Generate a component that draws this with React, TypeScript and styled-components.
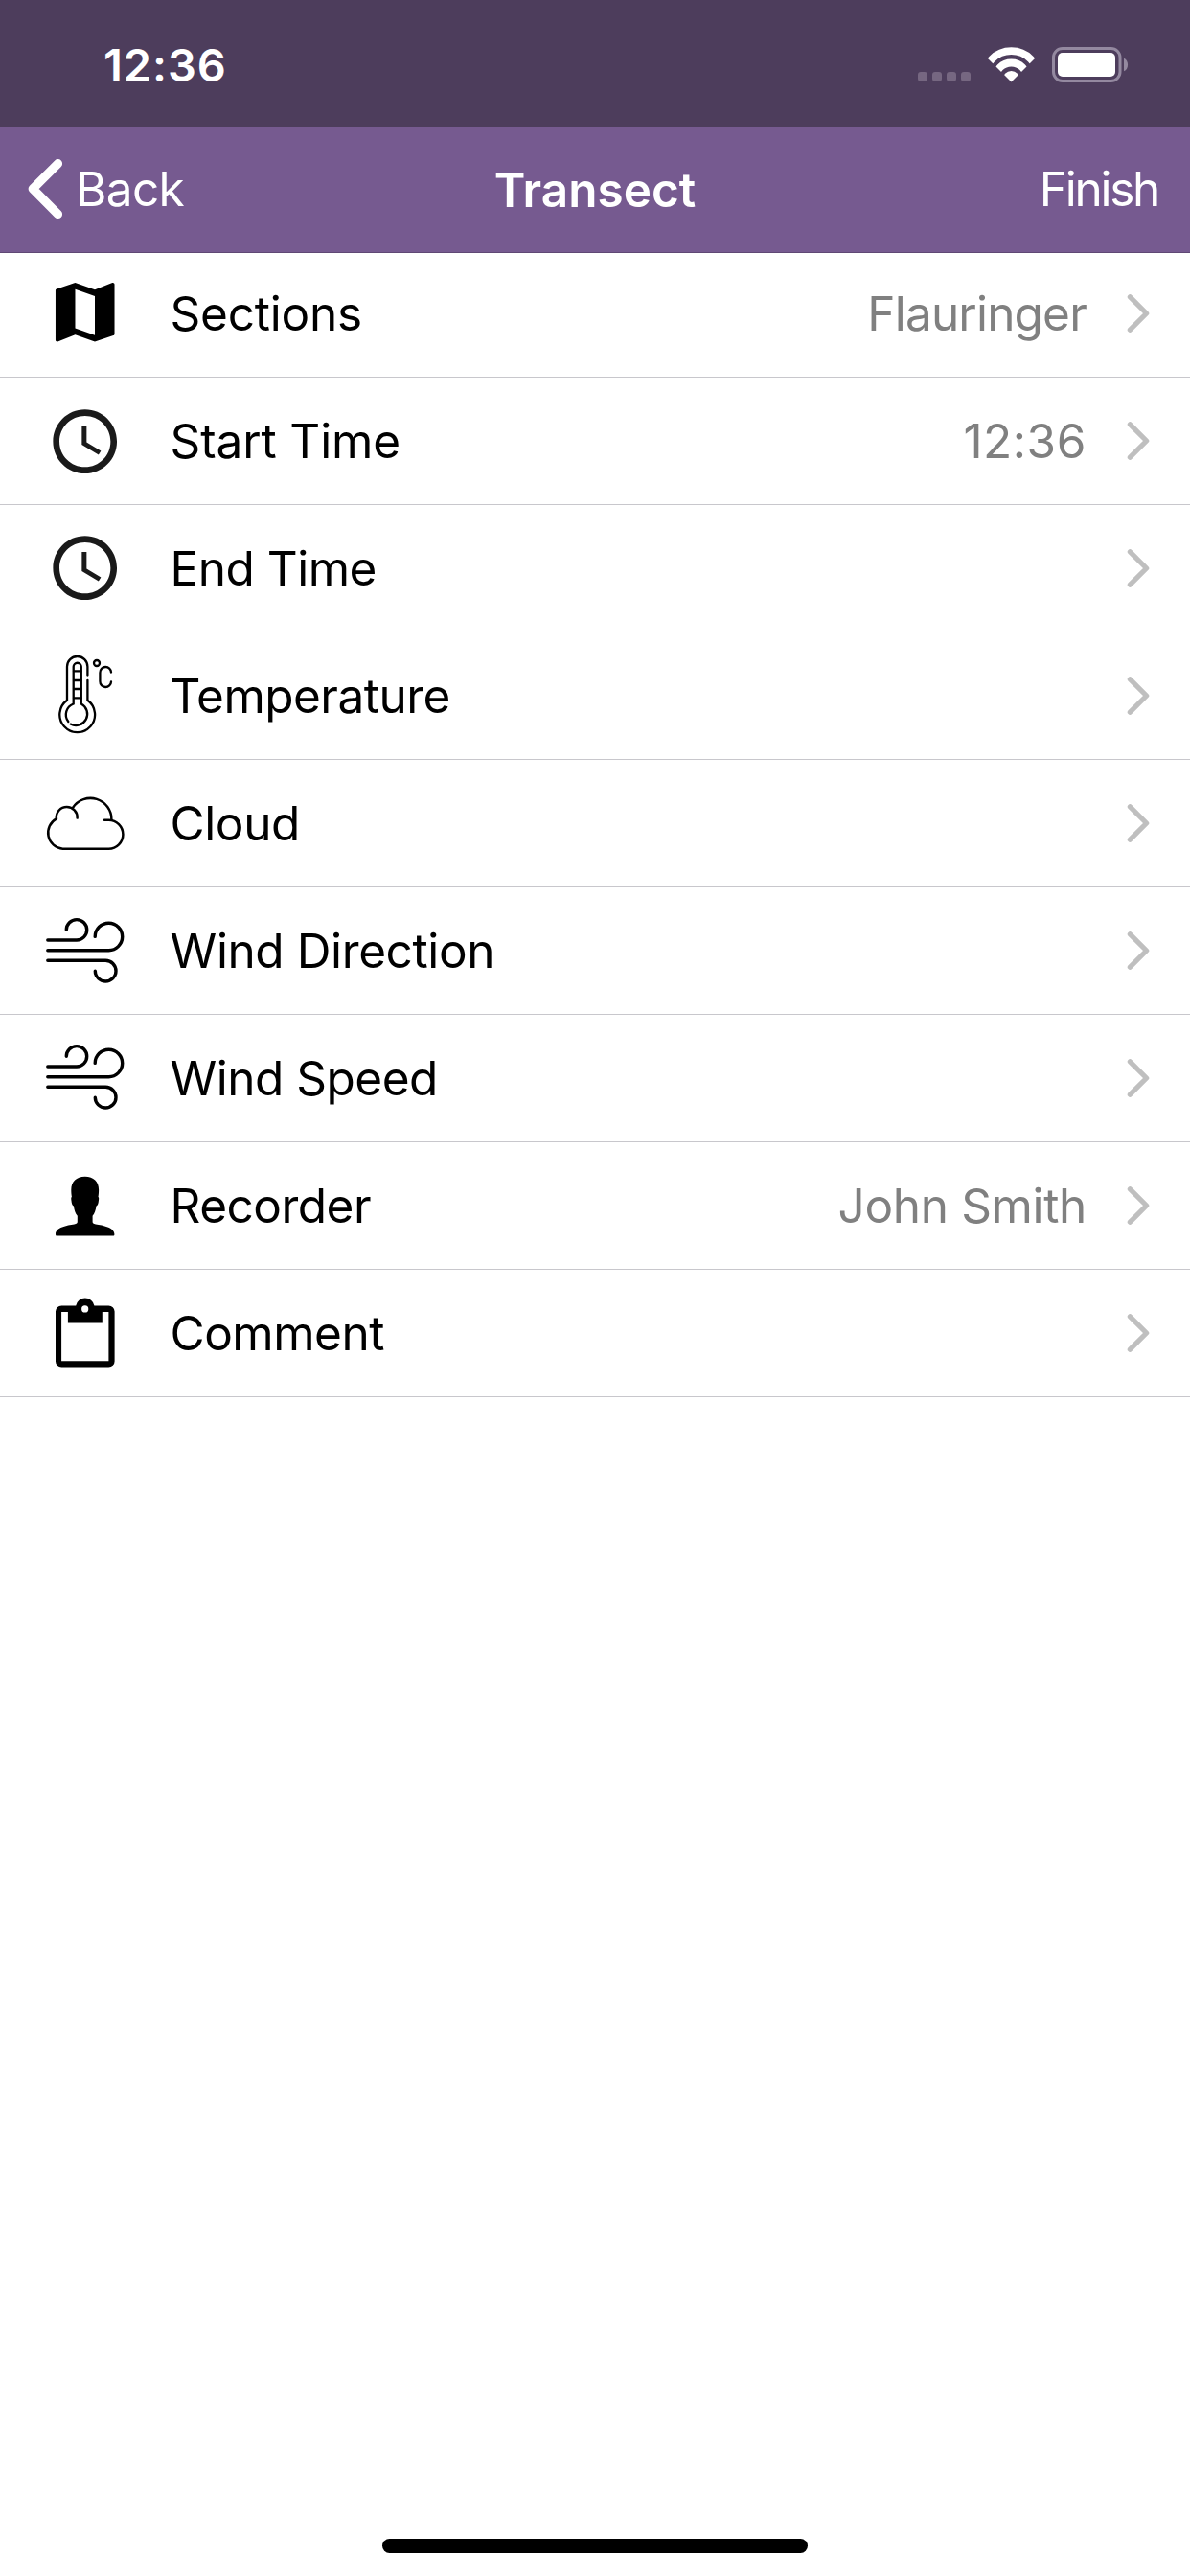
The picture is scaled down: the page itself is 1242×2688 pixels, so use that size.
import React from "react";
import styled, { createGlobalStyle } from "styled-components";

const GlobalStyle = createGlobalStyle`
  *, *::before, *::after { box-sizing: border-box; }
  body {
    margin: 0;
    background: #fff;
    font-family: Inter, "Liberation Sans", sans-serif;
  }
`;

const Screen = styled.div`
  display: flex;
  flex-direction: column;
  width: 1242px;
  height: 2688px;
  overflow: hidden;
  background: #fff;
`;

const StatusBar = styled.header`
  display: flex;
  align-items: center;
  justify-content: space-between;
  height: 132px;
  padding: 4px 60px 0 108px;
  background: #4d3d5c;
  color: #fff;
`;

const Clock = styled.span`
  font-size: 47px;
  font-weight: 600;
  line-height: 56px;
  letter-spacing: 0.93px;
`;

const NavBar = styled.nav`
  display: grid;
  grid-template-columns: 1fr auto 1fr;
  align-items: center;
  height: 132px;
  padding: 0 33px 1px 28px;
  border-bottom: 1px solid #5f4874;
  background: #765a90;
  color: #fff;
`;

const NavButton = styled.button<{ $end?: boolean; $tracking: number }>`
  display: flex;
  align-items: center;
  justify-self: ${(p) => (p.$end ? "end" : "start")};
  gap: 11px;
  padding: 0;
  border: 0;
  background: none;
  color: inherit;
  font: 400 49.5px/60px Inter, "Liberation Sans", sans-serif;
  letter-spacing: ${(p) => p.$tracking}px;
`;

const Title = styled.h1`
  margin: 2px 0 0 5px;
  font-size: 49.5px;
  font-weight: 600;
  line-height: 60px;
`;

const List = styled.ul`
  display: flex;
  flex-direction: column;
  flex: 1;
  margin: 0;
  padding: 0;
  list-style: none;
`;

const Row = styled.li`
  display: flex;
  align-items: center;
  height: 133px;
  padding: 0 42px 0 40px;
  border-bottom: 1px solid #c8c7cc;

  &:first-child {
    height: 130px;
    padding-bottom: 3px;
  }
`;

const RowIcon = styled.svg`
  flex: none;
  width: 96px;
  height: 100px;
  margin-right: 41.5px;
`;

const Label = styled.span<{ $tracking: number }>`
  flex: 1;
  font-size: 49.5px;
  line-height: 60px;
  letter-spacing: ${(p) => p.$tracking}px;
  color: #000;
`;

const Value = styled.span<{ $tracking: number }>`
  font-size: 49.5px;
  line-height: 60px;
  letter-spacing: ${(p) => p.$tracking}px;
  color: #808080;
`;

const RowChevron = styled.svg`
  flex: none;
  width: 24px;
  height: 44px;
  margin-left: 42px;
`;

const HomeArea = styled.footer`
  display: flex;
  justify-content: center;
  padding-bottom: 24px;
`;

const HomeIndicator = styled.div`
  width: 444px;
  height: 15px;
  border-radius: 8px;
  background: #000;
`;

const StatusIcons = () => (
  <svg width="230" height="48" viewBox="952 44 230 48">
    <defs>
      <clipPath id="wifi-wedge">
        <path d="M1055.5 85.6L1015 45.1H1096z" />
      </clipPath>
    </defs>
    <g fill="#766781">
      <rect x="958" y="75" width="10" height="10" rx="3" />
      <rect x="973" y="75" width="10" height="10" rx="3" />
      <rect x="988" y="75" width="10" height="10" rx="3" />
      <rect x="1003" y="75" width="10" height="10" rx="3" />
    </g>
    <g clipPath="url(#wifi-wedge)">
      <circle cx="1055.5" cy="82" r="28.8" fill="none" stroke="#fff" strokeWidth="7.8" />
      <circle cx="1055.5" cy="82" r="16.5" fill="none" stroke="#fff" strokeWidth="7.8" />
      <circle cx="1055.5" cy="83" r="9" fill="#fff" />
    </g>
    <rect x="1099.5" y="50.5" width="69.5" height="34" rx="9.5" fill="none" stroke="#9489a0" strokeWidth="3" />
    <rect x="1104" y="55" width="60" height="25" rx="5" fill="#fff" />
    <path d="M1173 60.7C1178.4 62.6 1178.4 72.4 1173 74.3z" fill="#9489a0" />
  </svg>
);

const BackChevron = () => (
  <svg width="40" height="66" viewBox="28 164 40 66">
    <path
      d="M60.5 170.7L34.2 197L60.5 223.5"
      fill="none"
      stroke="#fff"
      strokeWidth="9.2"
      strokeLinecap="round"
      strokeLinejoin="round"
    />
  </svg>
);

const MapGlyph = () => (
  <g transform="translate(7.7 7.7) scale(3.42)">
    <path d="M20.5 3l-.16.03L15 5.1 9 3 3.36 4.9c-.21.07-.36.25-.36.48V20.5c0 .28.22.5.5.5l.16-.03L9 18.9l6 2.1 5.64-1.9c.21-.07.36-.25.36-.48V3.5c0-.28-.22-.5-.5-.5zM15 19l-6-2.11V5l6 2.11V19z" />
  </g>
);

const ClockGlyph = ({ y }: { y: number }) => (
  <g transform={`translate(8.7 ${y}) scale(3.333)`} fill="#1a1a1a">
    <path d="M11.99 2C6.47 2 2 6.48 2 12s4.47 10 9.99 10C17.52 22 22 17.52 22 12S17.52 2 11.99 2zM12 20c-4.42 0-8-3.58-8-8s3.58-8 8-8 8 3.58 8 8-3.58 8-8 8zm.5-13H11v6l5.25 3.15.75-1.23-4.5-2.67z" />
  </g>
);

const ThermometerGlyph = () => (
  <g fill="none" stroke="#000" strokeWidth="2.3" strokeLinecap="round">
    <path d="M51.4 28.6V19.7A10.7 10.7 0 0 0 30 19.7V54.8A18.4 18.4 0 1 0 51.4 54.8V33.8" />
    <path d="M31.3 77A11.9 11.9 0 0 1 36.7 58.5V19.8A4.05 4.05 0 0 1 44.8 19.8V58.5A11.9 11.9 0 1 1 33.6 79.6" />
    <path d="M37 24.3H44.5M37 34H44.5M37 43H44.5M37 52.3H44.5" />
    <circle cx="61" cy="16" r="3" />
    <path d="M76 25.6A5.6 5.6 0 0 0 64.4 26V35A5.6 5.6 0 0 0 76 35.4" />
  </g>
);

const CloudGlyph = () => (
  <g fill="none" stroke="#000" strokeWidth="2.5" strokeLinecap="round" strokeLinejoin="round">
    <path d="M36.1 33.7A22 22 0 0 1 76.4 46.3" />
    <path d="M18.9 45.4A10.9 10.9 0 0 1 29.7 33A10.9 10.9 0 0 1 40.6 44.6" />
    <path d="M18.9 45.4A16.7 16.7 0 0 0 25.5 76.7H73.4A15 15 0 0 0 73.4 46.7H69" />
  </g>
);

const WindGlyph = ({ y }: { y: number }) => (
  <g
    transform={`translate(0 ${y})`}
    fill="none"
    stroke="#000"
    strokeWidth="3.4"
    strokeLinecap="round"
  >
    <path d="M9.8 38H40A10.7 10.7 0 1 0 29.3 27.3" />
    <path d="M9.8 48.7H73.3A14.25 14.25 0 1 0 59.2 34.4" />
    <path d="M9.8 59.3H70.2A10.85 10.85 0 1 1 59.3 70.2" />
  </g>
);

const PersonGlyph = () => (
  <path d="M48.7 19.7C39.6 19.7 34.3 25 34.3 33.5C34.3 36 34.5 39 34.9 41C34 41.3 34.2 43 34.5 45C34.8 48 35.3 49.6 36.9 50.4C37.5 54.5 38.6 58 40.8 60.8V67C40.8 68.2 40 69 37.5 69.6C30 70.6 18 73 18 80C18 81 18.4 81.5 19.4 81.5H78C79 81.5 79.4 81 79.4 80C79.4 73 67.4 70.6 59.9 69.6C57.4 69 56.6 68.2 56.6 67V60.8C58.8 58 59.9 54.5 60.5 50.4C62.1 49.6 62.6 48 62.9 45C63.2 43 63.4 41.3 62.5 41C62.9 39 63.1 36 63.1 33.5C63.1 25 57.8 19.7 48.7 19.7Z" />
);

const ClipboardGlyph = () => (
  <path
    fillRule="evenodd"
    d="M24.2 21.4H39.2A9.8 9.8 0 0 1 58.4 21.4H73.4A6.2 6.2 0 0 1 79.6 27.6V79.4A6.2 6.2 0 0 1 73.4 85.6H24.2A6.2 6.2 0 0 1 18 79.4V27.6A6.2 6.2 0 0 1 24.2 21.4ZM24.1 28V79.2H73.4V28H66.8V39.4H30.9V28ZM48.7 21.3A3.6 3.6 0 1 0 48.7 28.5A3.6 3.6 0 1 0 48.7 21.3Z"
  />
);

type Item = {
  label: string;
  tracking: number;
  icon: React.ReactNode;
  value?: string;
  valueTracking?: number;
};

const items: Item[] = [
  { label: "Sections", tracking: -0.23, icon: <MapGlyph />, value: "Flauringer", valueTracking: -0.81 },
  { label: "Start Time", tracking: -0.12, icon: <ClockGlyph y={10.7} />, value: "12:36", valueTracking: 0.55 },
  { label: "End Time", tracking: -0.5, icon: <ClockGlyph y={9.7} /> },
  { label: "Temperature", tracking: -0.52, icon: <ThermometerGlyph /> },
  { label: "Cloud", tracking: -0.39, icon: <CloudGlyph /> },
  { label: "Wind Direction", tracking: -0.39, icon: <WindGlyph y={1} /> },
  { label: "Wind Speed", tracking: -0.5, icon: <WindGlyph y={0} /> },
  { label: "Recorder", tracking: -0.5, icon: <PersonGlyph />, value: "John Smith", valueTracking: -0.35 },
  { label: "Comment", tracking: -0.5, icon: <ClipboardGlyph /> },
];

export default function App() {
  return (
    <>
      <GlobalStyle />
      <Screen>
        <StatusBar>
          <Clock>12:36</Clock>
          <StatusIcons />
        </StatusBar>
        <NavBar>
          <NavButton $tracking={-0.64}>
            <BackChevron />
            Back
          </NavButton>
          <Title>Transect</Title>
          <NavButton $end $tracking={-2.27}>
            Finish
          </NavButton>
        </NavBar>
        <List>
          {items.map((item) => (
            <Row key={item.label}>
              <RowIcon viewBox="0 0 96 100">{item.icon}</RowIcon>
              <Label $tracking={item.tracking}>{item.label}</Label>
              {item.value && <Value $tracking={item.valueTracking ?? 0}>{item.value}</Value>}
              <RowChevron viewBox="0 0 24 44">
                <path
                  d="M3.4 4.8L20.6 22L3.4 39.2"
                  fill="none"
                  stroke="#bfbfbf"
                  strokeWidth="5.3"
                  strokeLinecap="round"
                  strokeLinejoin="round"
                />
              </RowChevron>
            </Row>
          ))}
        </List>
        <HomeArea>
          <HomeIndicator />
        </HomeArea>
      </Screen>
    </>
  );
}
